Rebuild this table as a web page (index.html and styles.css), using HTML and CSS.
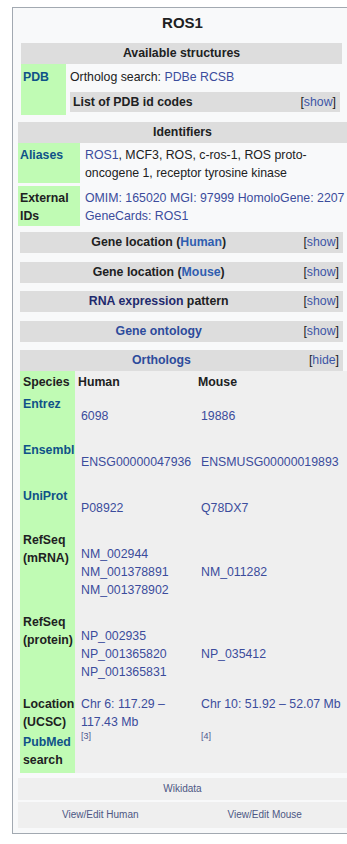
FILE: index.html
```html
<!DOCTYPE html>
<html lang="en">
<head>
<meta charset="utf-8">
<title>ROS1</title>
<link rel="stylesheet" href="styles.css">
</head>
<body>
<div class="infobox">
  <div class="caption">ROS1</div>

  <section class="avail">
    <div class="hdr">Available structures</div>
    <div class="pdb-row">
      <div class="lbl"><a class="lbl-link">PDB</a></div>
      <div class="pdb-val">
        <div class="orth-search">Ortholog search: <a class="lnk">PDBe</a> <a class="lnk">RCSB</a></div>
        <div class="bar bar-left"><span class="bar-title">List of PDB id codes</span><span class="toggle">[<a class="tog">show</a>]</span></div>
      </div>
    </div>
  </section>

  <div class="hdr ident-hdr">Identifiers</div>
  <div class="id-row">
    <div class="lbl"><a class="lbl-link">Aliases</a></div>
    <div class="id-val"><a class="lnk">ROS1</a><span>, MCF3, ROS, c-ros-1, ROS proto-oncogene 1, receptor tyrosine kinase</span></div>
  </div>
  <div class="id-row">
    <div class="lbl">External IDs</div>
    <div class="id-val"><span class="nowrap"><a class="lnk">OMIM: 165020</a> <a class="lnk">MGI: 97999</a> <a class="lnk">HomoloGene: 2207</a></span> <a class="lnk">GeneCards: ROS1</a></div>
  </div>

  <div class="bar bar-first"><span class="bar-title">Gene location (<a class="lnk-b">Human</a>)</span><span class="toggle">[<a class="tog">show</a>]</span></div>
  <div class="bar"><span class="bar-title">Gene location (<a class="lnk-b">Mouse</a>)</span><span class="toggle">[<a class="tog">show</a>]</span></div>
  <div class="bar"><span class="bar-title"><a class="lnk-dark">RNA expression</a> pattern</span><span class="toggle">[<a class="tog">show</a>]</span></div>
  <div class="bar"><span class="bar-title"><a class="lnk-mid">Gene ontology</a></span><span class="toggle">[<a class="tog">show</a>]</span></div>
  <div class="bar"><span class="bar-title"><a class="lnk-mid">Orthologs</a></span><span class="toggle">[<a class="tog">hide</a>]</span></div>

  <div class="orth">
    <div class="olbl ohead">Species</div>
    <div class="ohead ocol">Human</div>
    <div class="ohead ocol">Mouse</div>

    <div class="olbl olbl-pad"><a class="lbl-link">Entrez</a></div>
    <div class="v"><a class="lnk">6098</a></div>
    <div class="v"><a class="lnk">19886</a></div>

    <div class="olbl olbl-pad"><a class="lbl-link">Ensembl</a></div>
    <div class="v"><a class="lnk">ENSG00000047936</a></div>
    <div class="v"><a class="lnk">ENSMUSG00000019893</a></div>

    <div class="olbl olbl-pad"><a class="lbl-link">UniProt</a></div>
    <div class="v"><a class="lnk">P08922</a></div>
    <div class="v"><a class="lnk">Q78DX7</a></div>

    <div class="olbl">RefSeq (mRNA)</div>
    <div class="v"><a class="lnk">NM_002944</a><br><a class="lnk">NM_001378891</a><br><a class="lnk">NM_001378902</a></div>
    <div class="v"><a class="lnk">NM_011282</a></div>

    <div class="olbl">RefSeq (protein)</div>
    <div class="v"><a class="lnk">NP_002935</a><br><a class="lnk">NP_001365820</a><br><a class="lnk">NP_001365831</a></div>
    <div class="v"><a class="lnk">NP_035412</a></div>

    <div class="olbl">Location (UCSC)</div>
    <div class="vp"><a class="lnk">Chr 6: 117.29 – 117.43 Mb</a></div>
    <div class="vp"><a class="lnk">Chr 10: 51.92 – 52.07 Mb</a></div>

    <div class="olbl olbl-last"><a class="lbl-link">PubMed</a> search</div>
    <div class="vp"><sup class="ref">[3]</sup></div>
    <div class="vp"><sup class="ref">[4]</sup></div>
  </div>

  <div class="foot foot-wd"><a class="small-link">Wikidata</a></div>
  <div class="foot foot-edit">
    <div class="foot-cell"><a class="small-link">View/Edit Human</a></div>
    <div class="foot-cell"><a class="small-link">View/Edit Mouse</a></div>
  </div>
</div>
</body>
</html>
```

FILE: styles.css
```css
html {
  overflow: hidden;
  background: #ffffff;
}

body {
  margin: 0;
  font-family: "Liberation Sans", Arial, sans-serif;
  font-size: 12.32px;
  line-height: 18px;
  color: #202122;
}

a {
  text-decoration: none;
}

.infobox {
  margin: 7px 0 0 12px;
  width: 329px;
  padding: 0 5px 5px 5px;
  border: 1px solid #a2a9b1;
  background: #f8f9fa;
}

.caption {
  text-align: center;
  font-weight: bold;
  font-size: 15px;
  line-height: 20px;
  padding: 5px 0 10px 0;
}

.hdr {
  background: #dddddd;
  text-align: center;
  font-weight: bold;
  line-height: 21px;
  height: 21px;
}

.avail {
  margin: 0 5px 0 3px;
}

.pdb-row {
  display: grid;
  grid-template-columns: 45px 1fr;
}

.lbl {
  background: #c0fbb4;
  font-weight: bold;
  padding: 3px 0 1px 2px;
}

.pdb-row .lbl {
  padding-top: 4px;
}

.lbl-link {
  color: #0f5288;
}

.lnk {
  color: #3b4c9c;
}

.lnk-b {
  color: #2f5db0;
}

.lnk-dark {
  color: #1f2a6e;
}

.lnk-mid {
  color: #2d4b9c;
}

.tog {
  color: #3c55a6;
}

.pdb-val {
  padding: 4px 0 3px 4px;
}

.orth-search {
  line-height: 18px;
}

.bar {
  display: flex;
  background: #dddddd;
  height: 21px;
  line-height: 21px;
  margin: 8.5px 4px 0 2px;
  font-weight: bold;
}

.bar .toggle {
  font-weight: normal;
  padding: 0 4px 0 6px;
}

.bar-title {
  flex: 1;
  text-align: center;
}

.bar-left {
  margin: 6px 2px 0 0;
  height: 20px;
  line-height: 20px;
}

.bar-left .bar-title {
  text-align: left;
  padding-left: 3px;
}

.bar-first {
  margin-top: 6px;
}

.ident-hdr {
  margin-top: 7px;
}

.id-row {
  display: grid;
  grid-template-columns: 62px 1fr;
  margin-bottom: 3px;
}

.id-val {
  padding: 3px 0 1px 5px;
}

.nowrap {
  white-space: nowrap;
}

.orth {
  display: grid;
  grid-template-columns: 55px 120px 1fr;
  margin: 0 0 0 2px;
  background: #efefef;
}

.olbl {
  background: #c0fbb4;
  font-weight: bold;
  padding: 0 0 0 3px;
}

.olbl-pad {
  padding-top: 2px;
}

.ohead {
  font-weight: bold;
  padding-top: 2px;
  padding-bottom: 2px;
}

.ocol {
  padding-left: 3px;
}

.v {
  padding: 14px 0 14px 6px;
  align-self: center;
}

.vp {
  padding: 0 0 0 6px;
}

.olbl-last {
  padding-top: 2px;
  padding-bottom: 4px;
}

.ref {
  font-size: 9px;
  line-height: 1;
  color: #4e5690;
}

.foot {
  background: #efefef;
  text-align: center;
  font-size: 10px;
}

.foot-wd {
  margin-top: 5px;
  line-height: 22px;
}

.foot-edit {
  margin-top: 2px;
  line-height: 26px;
  display: grid;
  grid-template-columns: 1fr 1fr;
}

.small-link {
  color: #4d5784;
}
```
